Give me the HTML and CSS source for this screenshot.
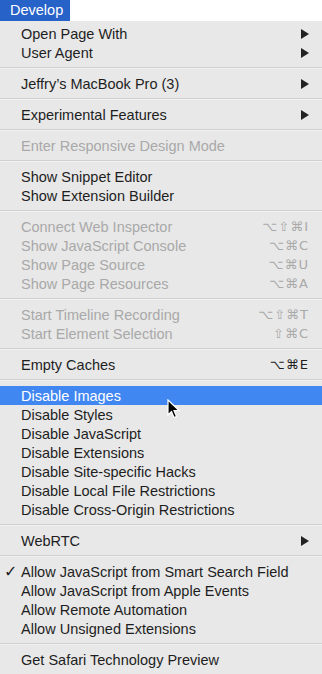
FILE: index.html
```html
<!DOCTYPE html>
<html lang="en">
<head>
  <meta charset="UTF-8">
  <meta name="viewport" content="width=device-width, initial-scale=1.0">
  <title>Develop Menu</title>
  <link rel="stylesheet" href="styles.css">
</head>
<body>

<div class="menubar">
  <span class="menu-title">Develop</span>
</div>

<ul class="menu">
  <li class="item"><span class="check"></span><span class="label">Open Page With</span><svg class="arrow" viewBox="0 0 8 10"><polygon points="0,0 8,5 0,10"/></svg></li>
  <li class="item"><span class="check"></span><span class="label">User Agent</span><svg class="arrow" viewBox="0 0 8 10"><polygon points="0,0 8,5 0,10"/></svg></li>
  <li class="sep"></li>
  <li class="item"><span class="check"></span><span class="label">Jeffry’s MacBook Pro (3)</span><svg class="arrow" viewBox="0 0 8 10"><polygon points="0,0 8,5 0,10"/></svg></li>
  <li class="sep"></li>
  <li class="item"><span class="check"></span><span class="label">Experimental Features</span><svg class="arrow" viewBox="0 0 8 10"><polygon points="0,0 8,5 0,10"/></svg></li>
  <li class="sep"></li>
  <li class="item disabled"><span class="check"></span><span class="label">Enter Responsive Design Mode</span></li>
  <li class="sep"></li>
  <li class="item"><span class="check"></span><span class="label">Show Snippet Editor</span></li>
  <li class="item"><span class="check"></span><span class="label">Show Extension Builder</span></li>
  <li class="sep"></li>
  <li class="item disabled"><span class="check"></span><span class="label">Connect Web Inspector</span><span class="keys">⌥⇧⌘I</span></li>
  <li class="item disabled"><span class="check"></span><span class="label">Show JavaScript Console</span><span class="keys">⌥⌘C</span></li>
  <li class="item disabled"><span class="check"></span><span class="label">Show Page Source</span><span class="keys">⌥⌘U</span></li>
  <li class="item disabled"><span class="check"></span><span class="label">Show Page Resources</span><span class="keys">⌥⌘A</span></li>
  <li class="sep"></li>
  <li class="item disabled"><span class="check"></span><span class="label">Start Timeline Recording</span><span class="keys">⌥⇧⌘T</span></li>
  <li class="item disabled"><span class="check"></span><span class="label">Start Element Selection</span><span class="keys">⇧⌘C</span></li>
  <li class="sep"></li>
  <li class="item"><span class="check"></span><span class="label">Empty Caches</span><span class="keys">⌥⌘E</span></li>
  <li class="sep"></li>
  <li class="item selected"><span class="check"></span><span class="label">Disable Images</span>
    <svg class="cursor" viewBox="0 0 14 21"><path d="M1 1 L1 16 L4.5 12.5 L7 18.5 L9.5 17.5 L7 11.5 L12 11.5 Z" fill="#000" stroke="#fff" stroke-width="1.2"/></svg>
  </li>
  <li class="item"><span class="check"></span><span class="label">Disable Styles</span></li>
  <li class="item"><span class="check"></span><span class="label">Disable JavaScript</span></li>
  <li class="item"><span class="check"></span><span class="label">Disable Extensions</span></li>
  <li class="item"><span class="check"></span><span class="label">Disable Site-specific Hacks</span></li>
  <li class="item"><span class="check"></span><span class="label">Disable Local File Restrictions</span></li>
  <li class="item"><span class="check"></span><span class="label">Disable Cross-Origin Restrictions</span></li>
  <li class="sep"></li>
  <li class="item"><span class="check"></span><span class="label">WebRTC</span><svg class="arrow" viewBox="0 0 8 10"><polygon points="0,0 8,5 0,10"/></svg></li>
  <li class="sep"></li>
  <li class="item"><span class="check">✓</span><span class="label">Allow JavaScript from Smart Search Field</span></li>
  <li class="item"><span class="check"></span><span class="label">Allow JavaScript from Apple Events</span></li>
  <li class="item"><span class="check"></span><span class="label">Allow Remote Automation</span></li>
  <li class="item"><span class="check"></span><span class="label">Allow Unsigned Extensions</span></li>
  <li class="sep"></li>
  <li class="item"><span class="check"></span><span class="label">Get Safari Technology Preview</span></li>
</ul>

</body>
</html>
```

FILE: styles.css
```css
body {
  font-family: "Liberation Sans", Arial, sans-serif;
  font-size: 14.5px;
  margin: 0;
  padding: 0;
  background-color: #e8e8e8;
  color: #1e1e1e;
}
.menubar {
  height: 21px;
  background-color: #fff;
  display: flex;
}
.menu-title {
  display: block;
  width: 70px;
  height: 21px;
  line-height: 21px;
  padding-left: 10px;
  box-sizing: border-box;
  background-color: #2762c8;
  color: #fff;
}
.menu {
  list-style: none;
  margin: 0;
  padding: 3px 0 5px 0;
  background-color: #e8e8e8;
}
.item {
  position: relative;
  display: flex;
  align-items: center;
  height: 19px;
  padding-right: 13px;
}
.check {
  width: 21px;
  flex: none;
  padding-left: 4px;
  box-sizing: border-box;
  font-family: "DejaVu Sans", sans-serif;
  font-size: 16px;
  font-weight: bold;
}
.label {
  flex: 1;
  white-space: nowrap;
}
.keys {
  font-family: "DejaVu Sans", sans-serif;
  font-size: 13px;
  letter-spacing: 1px;
}
.arrow {
  width: 8px;
  height: 10px;
  fill: #222;
}
.disabled {
  color: #a9a9a9;
}
.selected {
  background-color: #4187f2;
  color: #fff;
}
.sep {
  height: 12px;
  display: flex;
  align-items: center;
}
.sep::before {
  content: "";
  display: block;
  width: 100%;
  height: 1px;
  background-color: #d0d0d0;
  border-bottom: 1px solid #f2f2f2;
}
.cursor {
  position: absolute;
  left: 167px;
  top: 13px;
  width: 14px;
  height: 21px;
}
```
